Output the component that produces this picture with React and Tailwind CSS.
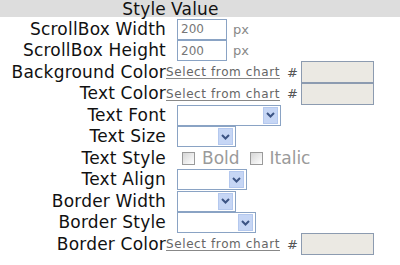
import React from 'react'

// ── Small form pieces ─────────────────────────────────────────────

function Select({ width }) {
  return (
    <div
      className="ml-[11px] h-[21px] border border-[#8aa3c4] bg-white flex items-center justify-end pr-[2px]"
      style={{ width }}
    >
      <div className="w-[15px] h-[17px] bg-[#c6d6f5] border border-[#b4c8ee] flex items-center justify-center">
        <svg width="9" height="6" viewBox="0 0 9 6">
          <path d="M1 1 L4.5 4.5 L8 1" stroke="#3c5484" strokeWidth="2" fill="none" />
        </svg>
      </div>
    </div>
  )
}

function TextBox({ value }) {
  return (
    <div className="ml-[11px] w-[50px] h-[21px] border border-[#8aa3c4] bg-white flex items-center pl-[3px] text-[12px] text-[#777]">
      {value}
    </div>
  )
}

function ColorPick() {
  return (
    <div className="flex items-center">
      <span className="text-[12px] text-[#666] underline underline-offset-2 decoration-[#888] tracking-[0.6px] whitespace-nowrap">
        Select from chart
      </span>
      <span className="ml-[7px] text-[13px] text-[#555]">#</span>
      <div className="ml-[3px] w-[73px] h-[22px] border border-[#8c9bb0] bg-[#ebe9e3]" />
    </div>
  )
}

function Check({ label }) {
  return (
    <div className="flex items-center">
      <div className="w-[13px] h-[13px] border border-[#9a9a9a] bg-gradient-to-br from-[#d6d6d6] to-white" />
      <span className="ml-[7px] text-[17px] text-[#9a9a9a]">{label}</span>
    </div>
  )
}

// ── Rows ─────────────────────────────────────────────────────────

const ROWS = [
  { label: 'ScrollBox Width', kind: 'num' },
  { label: 'ScrollBox Height', kind: 'num' },
  { label: 'Background Color', kind: 'color' },
  { label: 'Text Color', kind: 'color' },
  { label: 'Text Font', kind: 'select', w: 104 },
  { label: 'Text Size', kind: 'select', w: 59 },
  { label: 'Text Style', kind: 'style' },
  { label: 'Text Align', kind: 'select', w: 70 },
  { label: 'Border Width', kind: 'select', w: 59 },
  { label: 'Border Style', kind: 'select', w: 79 },
  { label: 'Border Color', kind: 'color' },
]

function Row({ row }) {
  return (
    <div className="flex items-center h-[21.5px]">
      <div className="w-[166px] text-right text-[17px] tracking-[0.2px] text-[#111] leading-[21px] whitespace-nowrap">
        {row.label}
      </div>
      <div className="flex items-center">
        {row.kind === 'num' && (
          <>
            <TextBox value="200" />
            <span className="ml-[6px] text-[13px] text-[#888]">px</span>
          </>
        )}
        {row.kind === 'color' && <ColorPick />}
        {row.kind === 'select' && <Select width={row.w} />}
        {row.kind === 'style' && (
          <div className="ml-[16px] flex items-center gap-[10px]">
            <Check label="Bold" />
            <Check label="Italic" />
          </div>
        )}
      </div>
    </div>
  )
}

export default function App() {
  return (
    <div className="w-[400px] h-[265px] bg-white overflow-hidden font-['DejaVu_Sans',Verdana,sans-serif]">
      <div className="flex h-[17px] pt-[1px] bg-[#dddddd] text-[17px] tracking-[0.2px] text-[#111] leading-[16px]">
        <div className="w-[166px] text-right">Style</div>
        <div className="ml-[5px]">Value</div>
      </div>
      <div className="pt-[1.5px]">
        {ROWS.map((row) => (
          <Row key={row.label} row={row} />
        ))}
      </div>
    </div>
  )
}
